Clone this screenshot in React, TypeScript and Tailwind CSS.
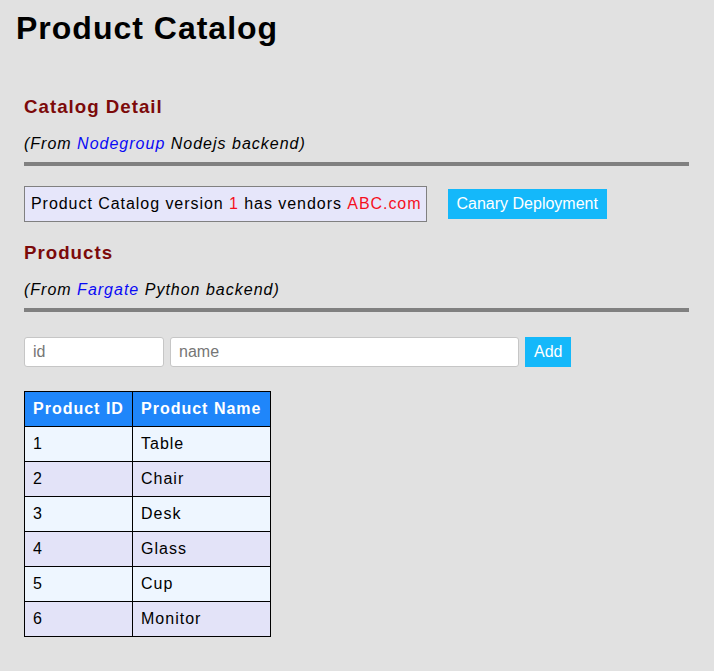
const products = [
  { id: 1, name: "Table" },
  { id: 2, name: "Chair" },
  { id: 3, name: "Desk" },
  { id: 4, name: "Glass" },
  { id: 5, name: "Cup" },
  { id: 6, name: "Monitor" },
];

function Section({ title, from, backend }: { title: string; from: string; backend: string }) {
  return (
    <>
      <h3 className="mt-[49px] text-[18.72px] leading-[22px] font-bold tracking-[1px] text-[#7c0a0a]">{title}</h3>
      <p className="mt-[17px] text-[16px] leading-[18px] italic tracking-[1px]">
        (From <span className="text-[#0a0af5]">{from}</span> {backend} backend)
      </p>
      <div className="mt-[9px] h-[4px] bg-[#808080]" />
    </>
  );
}

export default function App() {
  return (
    <div className="min-h-[671px] bg-[#e1e1e1] text-black font-['Liberation_Sans',Arial,sans-serif]">
      {/* title */}
      <h1 className="pt-[10px] pl-[16px] text-[32px] leading-[37px] font-bold tracking-[1px]">Product Catalog</h1>

      <div className="pl-[24px] w-[689px]">
        {/* catalog detail */}
        <Section title="Catalog Detail" from="Nodegroup" backend="Nodejs" />
        <div className="mt-[20px] flex items-center gap-[21px]">
          <div className="h-[36px] flex items-center pl-[6px] pr-[4px] border border-[#808080] bg-[#e6e6fa] text-[16px] leading-[18px] tracking-[0.95px]">
            Product Catalog version&nbsp;<span className="text-[#f5101e]">1</span>&nbsp;has vendors&nbsp;
            <span className="text-[#f5101e]">ABC.com</span>
          </div>
          <button className="h-[30px] px-[9px] bg-[#14b8fa] text-white text-[16px] leading-[18px]">Canary Deployment</button>
        </div>

        {/* products */}
        <div className="-mt-[29px]">
          <Section title="Products" from="Fargate" backend="Python" />
        </div>

        <div className="mt-[25px] flex gap-[6px]">
          <input
            placeholder="id"
            className="h-[30px] w-[140px] pl-[8px] rounded-[3px] border border-[#c6c6c6] bg-white text-[16px] placeholder:text-[#767676] outline-none"
          />
          <input
            placeholder="name"
            className="h-[30px] w-[349px] pl-[8px] rounded-[3px] border border-[#c6c6c6] bg-white text-[16px] placeholder:text-[#767676] outline-none"
          />
          <button className="h-[30px] px-[9px] bg-[#14b8fa] text-white text-[16px] leading-[18px]">Add</button>
        </div>

        {/* table */}
        <div className="mt-[24px] grid grid-cols-[108px_138px] w-[247px] border-l border-t border-black text-[16px] tracking-[1px]">
          <div className="h-[35px] flex items-center pl-[8px] border-r border-b border-black bg-[#1f86fa] text-white font-bold">Product ID</div>
          <div className="h-[35px] flex items-center pl-[8px] border-r border-b border-black bg-[#1f86fa] text-white font-bold">Product Name</div>
          {products.map((p, i) => (
            <div key={p.id} className="contents">
              <div className={`h-[35px] flex items-center pl-[8px] border-r border-b border-black ${i % 2 === 0 ? "bg-[#eef6ff]" : "bg-[#e3e3f8]"}`}>{p.id}</div>
              <div className={`h-[35px] flex items-center pl-[8px] border-r border-b border-black ${i % 2 === 0 ? "bg-[#eef6ff]" : "bg-[#e3e3f8]"}`}>{p.name}</div>
            </div>
          ))}
        </div>
      </div>
    </div>
  );
}
